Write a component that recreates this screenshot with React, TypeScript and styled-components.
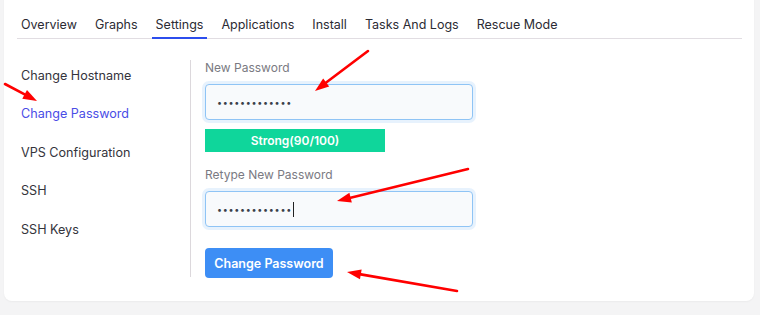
import React from 'react';
import styled, { createGlobalStyle } from 'styled-components';

const TABS = ['Overview', 'Graphs', 'Settings', 'Applications', 'Install', 'Tasks And Logs', 'Rescue Mode'];
const NAV = ['Change Hostname', 'Change Password', 'VPS Configuration', 'SSH', 'SSH Keys'];
const FONT = `Inter, "Open Sans", sans-serif`;

// annotation arrows: [fromX, fromY, tipX, tipY]
const ARROWS: [number, number, number, number][] = [
  [368, 51, 315, 91],
  [5, 84, 37, 101],
  [468, 169, 337, 201],
  [457, 291, 347, 272],
];

const Arrow = ({ a }: { a: [number, number, number, number] }) => {
  const [x1, y1, x2, y2] = a;
  const len = Math.hypot(x2 - x1, y2 - y1);
  const ux = (x2 - x1) / len;
  const uy = (y2 - y1) / len;
  const hl = 14;
  const hw = 5;
  const bx = x2 - ux * hl;
  const by = y2 - uy * hl;
  const head = `${x2},${y2} ${bx - uy * hw},${by + ux * hw} ${bx + uy * hw},${by - ux * hw}`;
  return (
    <g>
      <line x1={x1} y1={y1} x2={bx} y2={by} stroke="#ff0000" strokeWidth={2.6} strokeLinecap="round" />
      <polygon points={head} fill="#ff0000" />
    </g>
  );
};

const Settings = () => {
  return (
    <Page>
      <GlobalStyle />
      <Card>
        <TabBar>
          {TABS.map((t) => (
            <Tab key={t} $active={t === 'Settings'}>
              {t}
            </Tab>
          ))}
        </TabBar>
        <Body>
          <SideNav>
            <NavList>
              {NAV.map((n) => (
                <NavItem key={n} $active={n === 'Change Password'}>
                  {n}
                </NavItem>
              ))}
            </NavList>
          </SideNav>
          <Form>
            <Label>New Password</Label>
            <Field>{'•'.repeat(13)}</Field>
            <Strength>Strong(90/100)</Strength>
            <Label $top={15}>Retype New Password</Label>
            <Field>
              {'•'.repeat(13)}
              <Caret />
            </Field>
            <Button>Change Password</Button>
          </Form>
        </Body>
      </Card>
      <Annotations width={760} height={315} viewBox="0 0 760 315">
        {ARROWS.map((a, i) => (
          <Arrow key={i} a={a} />
        ))}
      </Annotations>
    </Page>
  );
};

const GlobalStyle = createGlobalStyle`
  html, body {
    margin: 0;
    padding: 0;
    background: #f4f4f5;
  }
  * {
    box-sizing: border-box;
  }
`;

const Page = styled.div`
  position: relative;
  width: 760px;
  height: 315px;
  overflow: hidden;
  font-family: ${FONT};
`;

const Card = styled.div`
  margin: -12px 0 0 4px;
  width: 750px;
  height: 313px;
  padding: 12px 12px 0 13px;
  background: #fff;
  border-radius: 8px;
  box-shadow: 0 1px 2px rgba(0, 0, 0, 0.04);
`;

const TabBar = styled.div`
  display: flex;
  gap: 10px;
  height: 39px;
  border-bottom: 1px solid #e1dde2;
`;

const Tab = styled.div<{ $active?: boolean }>`
  display: flex;
  align-items: flex-end;
  padding: 0 4px 4px;
  font-size: 12.5px;
  line-height: 16px;
  color: #2b2b33;
  border-bottom: 2px solid ${({ $active }) => ($active ? '#2c4ded' : 'transparent')};
  margin-bottom: -1px;
`;

const Body = styled.div`
  display: flex;
  padding-top: 21px;
`;

const SideNav = styled.nav`
  width: 174px;
  height: 217px;
  border-right: 1px solid #dcd8dc;
`;

const NavList = styled.div`
  display: flex;
  flex-direction: column;
  margin-top: -4px;
`;

const NavItem = styled.div<{ $active?: boolean }>`
  height: 38.5px;
  display: flex;
  align-items: center;
  padding-left: 4px;
  font-size: 12.6px;
  color: ${({ $active }) => ($active ? '#4a4de6' : '#34343c')};
`;

const Form = styled.div`
  display: flex;
  flex-direction: column;
  align-items: flex-start;
  padding-left: 14px;
`;

const Label = styled.div<{ $top?: number }>`
  font-size: 12px;
  color: #7a7a82;
  margin-top: ${({ $top }) => $top ?? 0}px;
  height: 16px;
  line-height: 16px;
`;

const Field = styled.div`
  margin-top: 8px;
  width: 268px;
  height: 36px;
  display: flex;
  align-items: center;
  padding-left: 11px;
  background: #f8fafc;
  border: 1px solid #8fc4f5;
  border-radius: 4px;
  box-shadow: 0 0 0 3px rgba(144, 196, 245, 0.22);
  font-size: 9px;
  letter-spacing: 0.7px;
  color: #3a3f4a;
`;

const Caret = styled.span`
  display: inline-block;
  width: 1px;
  height: 15px;
  margin-left: 1px;
  background: #222;
`;

const Strength = styled.div`
  margin-top: 9px;
  width: 180px;
  height: 23px;
  display: flex;
  align-items: center;
  justify-content: center;
  background: #0fd69b;
  color: #fff;
  font-size: 12px;
  font-weight: 600;
`;

const Button = styled.button`
  margin-top: 21px;
  width: 128px;
  height: 30px;
  border: none;
  border-radius: 4px;
  background: #3d8ef5;
  color: #fff;
  font-family: ${FONT};
  font-size: 12.5px;
  font-weight: 600;
  padding: 0;
`;

const Annotations = styled.svg`
  position: absolute;
  left: 0;
  top: 0;
  pointer-events: none;
`;

export default Settings;
